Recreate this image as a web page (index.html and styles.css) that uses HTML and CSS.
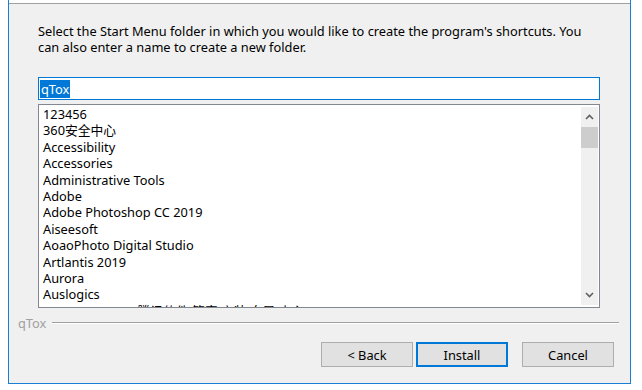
FILE: index.html
```html
<!DOCTYPE html>
<html lang="en">
<head>
  <meta charset="UTF-8">
  <title>qTox Setup - Choose Start Menu Folder</title>
  <link rel="stylesheet" href="styles.css">
</head>
<body>

  <div class="window">
    <div class="header"></div>

    <div class="content">
      <p class="intro">Select the Start Menu folder in which you would like to create the program's shortcuts. You<br>can also enter a name to create a new folder.</p>

      <div class="field"><span class="selected">qTox</span></div>

      <div class="listbox">
        <ul class="items">
          <li>123456</li>
          <li>360安全中心</li>
          <li>Accessibility</li>
          <li>Accessories</li>
          <li>Administrative Tools</li>
          <li>Adobe</li>
          <li>Adobe Photoshop CC 2019</li>
          <li>Aiseesoft</li>
          <li>AoaoPhoto Digital Studio</li>
          <li>Artlantis 2019</li>
          <li>Aurora</li>
          <li>Auslogics</li>
          <li>uuwwaaeusmo 腾讯软件 管家 安装 向导 中心</li>
        </ul>
        <div class="scrollbar">
          <div class="arrow">
            <svg width="9" height="6" viewBox="0 0 9 6"><path d="M1 5 L4.5 1.5 L8 5" fill="none" stroke="#606060" stroke-width="1.6"/></svg>
          </div>
          <div class="thumb"></div>
          <div class="track"></div>
          <div class="arrow">
            <svg width="9" height="6" viewBox="0 0 9 6"><path d="M1 1 L4.5 4.5 L8 1" fill="none" stroke="#606060" stroke-width="1.6"/></svg>
          </div>
        </div>
      </div>
    </div>

    <div class="brand">
      <span>qTox</span>
      <span class="rule"></span>
    </div>

    <div class="buttons">
      <button class="btn">&lt; Back</button>
      <button class="btn default">Install</button>
      <button class="btn cancel">Cancel</button>
    </div>
  </div>

</body>
</html>
```

FILE: styles.css
```css
body {
  margin: 0;
  background: #fff;
  font-family: "Noto Sans", "Noto Sans CJK SC", sans-serif;
  font-size: 12.8px;
  color: #000;
}
.window {
  margin-left: 8px;
  width: 621px;
  background: #f0f0f0;
  border: 1px solid #1a7fd4;
  border-top: none;
}
.header {
  height: 3px;
  background: #fff;
  border-bottom: 1px solid #a0a0a0;
}
.content {
  padding: 0 30px 0 29px;
}
.intro {
  margin: 19px 0 0;
  line-height: 16px;
  white-space: nowrap;
}
.field {
  margin-top: 22px;
  height: 21px;
  background: #fff;
  border: 1px solid #0078d7;
  display: flex;
  align-items: center;
  padding-left: 1px;
}
.selected {
  background: #0078d7;
  color: #fff;
  line-height: 18px;
  padding: 0 1px;
}
.listbox {
  margin-top: 4px;
  height: 199px;
  background: #fff;
  border: 1px solid #828790;
  padding: 1px 1px 2px 4px;
  display: flex;
  overflow: hidden;
}
.items {
  flex: 1;
  min-width: 0;
  list-style: none;
  margin: 0;
  padding: 0;
  line-height: 16.4px;
  white-space: nowrap;
}
.scrollbar {
  width: 17px;
  margin-top: 1px;
  background: #f0f0f0;
  display: flex;
  flex-direction: column;
  position: relative;
}
.arrow {
  height: 20px;
  display: flex;
  align-items: center;
  justify-content: center;
}
.thumb {
  height: 21px;
  background: #cdcdcd;
}
.track {
  flex: 1;
}
.brand {
  display: flex;
  align-items: center;
  gap: 6px;
  margin-top: 7px;
  padding: 0 11px 0 9px;
  line-height: 16px;
  color: #a0a0a0;
}
.rule {
  flex: 1;
  border-top: 1px solid #a0a0a0;
  border-bottom: 1px solid #fff;
}
.buttons {
  display: flex;
  justify-content: flex-end;
  gap: 3px;
  margin-top: 11px;
  padding: 0 16px 16px 0;
}
.btn {
  width: 92px;
  height: 25px;
  background: #e1e1e1;
  border: 1px solid #adadad;
  font-family: inherit;
  font-size: 12.8px;
  color: #000;
  padding: 0;
}
.default {
  border-color: #0078d7;
  box-shadow: inset 0 0 0 1px #0078d7;
}
.cancel {
  margin-left: 11px;
}
```
